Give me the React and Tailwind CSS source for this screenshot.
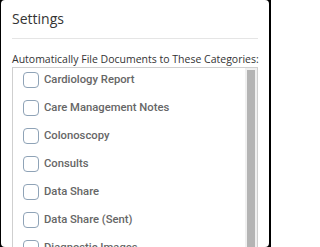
const categories = [
  'Cardiology Report',
  'Care Management Notes',
  'Colonoscopy',
  'Consults',
  'Data Share',
  'Data Share (Sent)',
  'Diagnostic Images',
  'Discharge Summary',
];

export default function App() {
  return (
    <div className="bg-black w-[271px] h-[247px] overflow-hidden">
      <div className="ml-[1px] mr-[2px] h-[247px] bg-white rounded-[4px] px-[11px] overflow-hidden">
        {/* Header */}
        <h2
          className="pt-[9px] text-[14px] leading-[20px] text-[#333]"
          style={{ fontFamily: '"Open Sans", sans-serif' }}
        >
          Settings
        </h2>
        <div className="mt-[9px] border-t border-[#e5e5e5]" />

        <p
          className="mt-[14px] text-[10.5px] leading-[13px] text-[#333] whitespace-nowrap"
          style={{ fontFamily: '"Open Sans", sans-serif' }}
        >
          Automatically File Documents to These Categories:
        </p>

        {/* Category list */}
        <div className="mt-[1px] h-[240px] border border-[#cfcfcf] flex">
          <div className="flex-1 flex flex-col gap-[12px] pt-[4px] pl-[10px]">
            {categories.map((category) => (
              <label key={category} className="flex items-center h-[16px] gap-[5px]">
                <span className="w-[16px] h-[16px] rounded-[4px] border border-[#8fa3b7] bg-white shrink-0" />
                <span
                  className="text-[11.25px] text-[#666] font-medium"
                  style={{ fontFamily: 'Roboto, sans-serif' }}
                >
                  {category}
                </span>
              </label>
            ))}
          </div>
          <div className="w-[12px] bg-[#f0f0f0] px-[2px] pt-[2px]">
            <div className="h-full bg-[#b4b4b4]" />
          </div>
        </div>
      </div>
    </div>
  );
}
